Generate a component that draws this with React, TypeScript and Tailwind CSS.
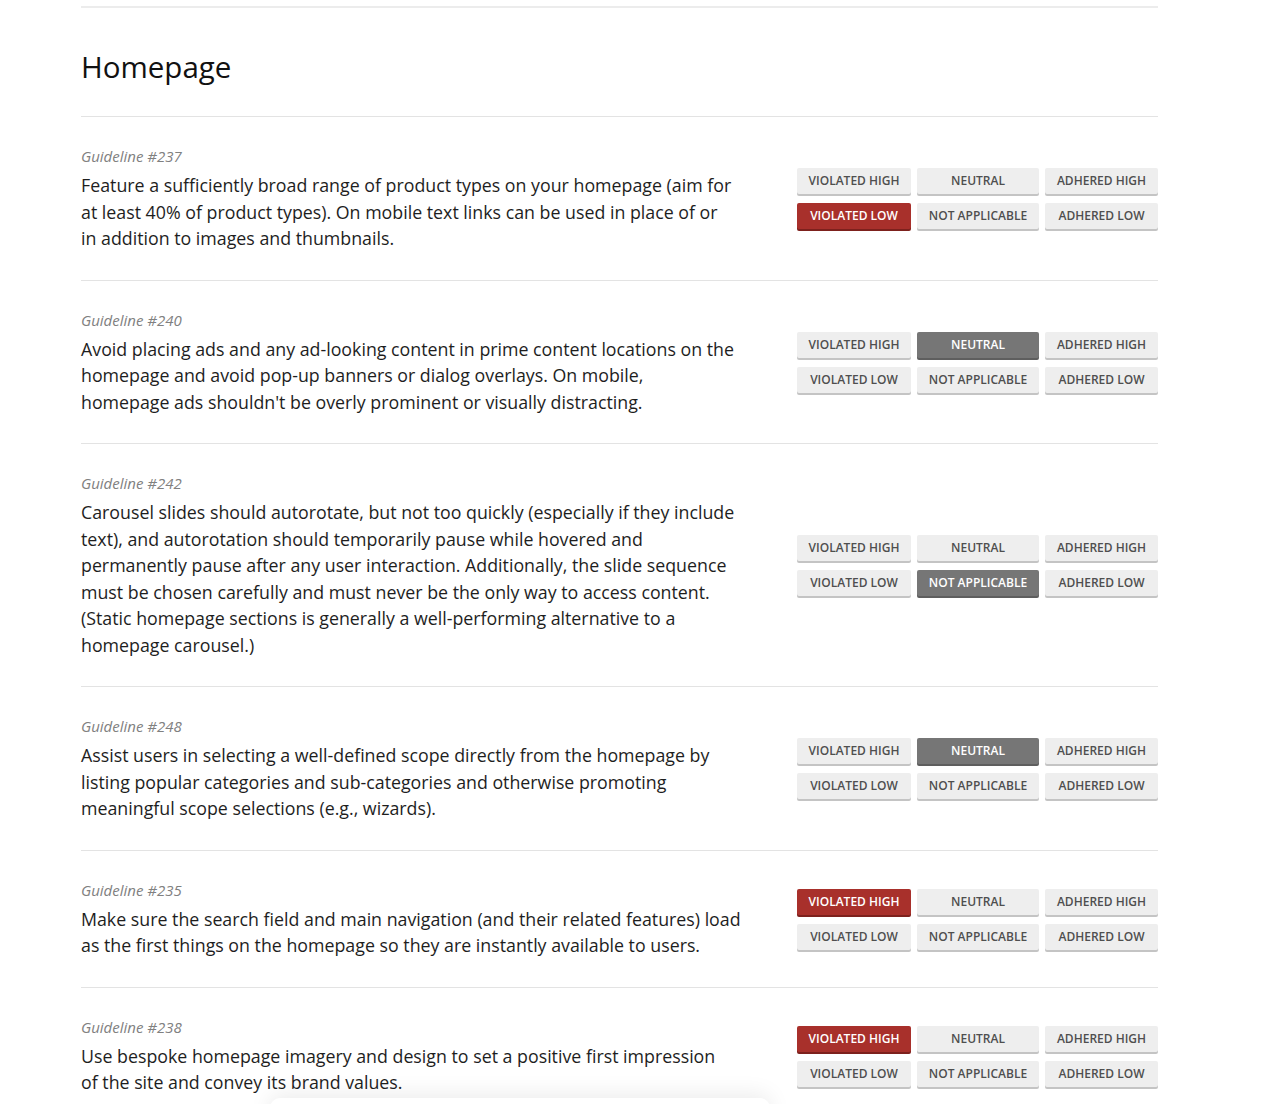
import React from "react";

type Sel = "VH" | "N" | "AH" | "VL" | "NA" | "AL" | null;

const items: { id: number; lines: string[]; sel: Sel }[] = [
  {
    id: 237,
    lines: [
      "Feature a sufficiently broad range of product types on your homepage (aim for",
      "at least 40% of product types). On mobile text links can be used in place of or",
      "in addition to images and thumbnails.",
    ],
    sel: "VL",
  },
  {
    id: 240,
    lines: [
      "Avoid placing ads and any ad-looking content in prime content locations on the",
      "homepage and avoid pop-up banners or dialog overlays. On mobile,",
      "homepage ads shouldn't be overly prominent or visually distracting.",
    ],
    sel: "N",
  },
  {
    id: 242,
    lines: [
      "Carousel slides should autorotate, but not too quickly (especially if they include",
      "text), and autorotation should temporarily pause while hovered and",
      "permanently pause after any user interaction. Additionally, the slide sequence",
      "must be chosen carefully and must never be the only way to access content.",
      "(Static homepage sections is generally a well-performing alternative to a",
      "homepage carousel.)",
    ],
    sel: "NA",
  },
  {
    id: 248,
    lines: [
      "Assist users in selecting a well-defined scope directly from the homepage by",
      "listing popular categories and sub-categories and otherwise promoting",
      "meaningful scope selections (e.g., wizards).",
    ],
    sel: "N",
  },
  {
    id: 235,
    lines: [
      "Make sure the search field and main navigation (and their related features) load",
      "as the first things on the homepage so they are instantly available to users.",
    ],
    sel: "VH",
  },
  {
    id: 238,
    lines: [
      "Use bespoke homepage imagery and design to set a positive first impression",
      "of the site and convey its brand values.",
    ],
    sel: "VH",
  },
];

function Btn({ label, k, sel, w }: { label: string; k: Sel; sel: Sel; w: string }) {
  const active = k === sel;
  const red = active && (k === "VH" || k === "VL");
  const gray = active && !red;
  const cls = red
    ? "bg-[#a8302b] text-white shadow-[0_2px_0_#7d211d]"
    : gray
    ? "bg-[#767676] text-white shadow-[0_2px_0_#5e5e5e]"
    : "bg-[#eeeeee] text-[#4f4f4f] shadow-[0_2px_0_#c4c4c4]";
  return (
    <div
      className={`${w} h-[26px] rounded-[2px] flex items-center justify-center text-[12px] font-semibold ${cls}`}
    >
      {label}
    </div>
  );
}

function Buttons({ sel }: { sel: Sel }) {
  return (
    <div className="flex flex-col gap-[9px]">
      <div className="flex gap-[6px]">
        <Btn label="VIOLATED HIGH" k="VH" sel={sel} w="w-[114px]" />
        <Btn label="NEUTRAL" k="N" sel={sel} w="w-[122px]" />
        <Btn label="ADHERED HIGH" k="AH" sel={sel} w="w-[113px]" />
      </div>
      <div className="flex gap-[6px]">
        <Btn label="VIOLATED LOW" k="VL" sel={sel} w="w-[114px]" />
        <Btn label="NOT APPLICABLE" k="NA" sel={sel} w="w-[122px]" />
        <Btn label="ADHERED LOW" k="AL" sel={sel} w="w-[113px]" />
      </div>
    </div>
  );
}

export default function App() {
  return (
    <div
      className="relative h-[1104px] overflow-hidden bg-white text-[#1e1e1e]"
      style={{ fontFamily: "'Open Sans', 'Noto Sans', sans-serif" }}
    >
      <div className="ml-[81px] w-[1077px]">
        <div className="mt-[6px] h-[2px] bg-[#ececec]" />
        <h1 className="pt-[41px] pb-[31px] text-[29.5px] leading-[36px] font-normal text-[#111111]">
          Homepage
        </h1>
        {items.map((it) => (
          <div
            key={it.id}
            className="border-t border-[#e3e3e3] flex items-center justify-between pt-[29px] pb-[28px]"
          >
            <div className="w-[680px]">
              <div className="text-[15px] leading-[20px] italic text-[#808080]">Guideline #{it.id}</div>
              <p className="mt-[6px] text-[17.8px] leading-[26.5px] text-[#1e1e1e] whitespace-nowrap">
                {it.lines.map((l, i) => (
                  <React.Fragment key={i}>
                    {l}
                    {i < it.lines.length - 1 && <br />}
                  </React.Fragment>
                ))}
              </p>
            </div>
            <Buttons sel={it.sel} />
          </div>
        ))}
      </div>
      <div className="absolute left-[270px] top-[1098px] w-[500px] h-[60px] rounded-[10px] bg-white shadow-[0_-4px_22px_rgba(0,0,0,0.08)]" />
    </div>
  );
}
